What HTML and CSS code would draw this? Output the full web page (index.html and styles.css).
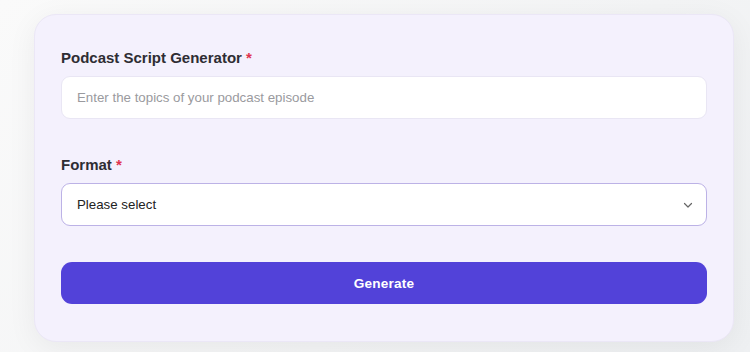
FILE: index.html
```html
<!DOCTYPE html>
<html>
<head>
<meta charset="utf-8">
<link rel="stylesheet" href="styles.css">
</head>
<body>
<div class="card">
  <div class="field">
    <label class="label">Podcast Script Generator <span class="req">*</span></label>
    <div class="input placeholder">Enter the topics of your podcast episode</div>
  </div>
  <div class="field">
    <label class="label">Format <span class="req">*</span></label>
    <div class="input select">
      <span>Please select</span>
      <svg width="12" height="12" viewBox="0 0 12 12"><path d="M2.5 4.5 L6 8 L9.5 4.5" fill="none" stroke="#666" stroke-width="1.2" stroke-linecap="round" stroke-linejoin="round"/></svg>
    </div>
  </div>
  <button class="btn">Generate</button>
</div>
</body>
</html>
```
FILE: styles.css
```css
html, body { margin: 0; padding: 0; }
body {
  width: 750px;
  height: 352px;
  overflow: hidden;
  background: linear-gradient(135deg, #fafafa 0%, #f3f4f5 60%, #eef0f2 100%);
  font-family: "Liberation Sans", Arial, sans-serif;
  padding-top: 14px;
  box-sizing: border-box;
}
.card {
  margin-left: 34px;
  width: 700px;
  height: 328px;
  box-sizing: border-box;
  padding: 34px 26px 0 26px;
  background: #f4f1fd;
  border: 1px solid #ebe7f6;
  border-radius: 22px;
  box-shadow: 0 6px 30px rgba(0,0,0,0.06);
  display: flex;
  flex-direction: column;
}
.field { display: flex; flex-direction: column; }
.field + .field { margin-top: 37px; }
.label {
  font-size: 15px;
  font-weight: bold;
  color: #2e2d33;
  line-height: 18px;
  margin-bottom: 9px;
}
.req { color: #e0344f; }
.input {
  height: 43px;
  box-sizing: border-box;
  background: #fff;
  border: 1px solid #e9e6f4;
  border-radius: 9px;
  padding: 0 15px;
  display: flex;
  align-items: center;
  font-size: 13.3px;
}
.placeholder { color: #9a9a9e; }
.select {
  justify-content: space-between;
  color: #222;
  border-color: #bcb2e6;
  padding-right: 12px;
}
.btn {
  margin-top: 36px;
  height: 42px;
  border: none;
  border-radius: 11px;
  background: #5242d9;
  color: #fff;
  font-family: "Liberation Sans", Arial, sans-serif;
  font-size: 13.6px;
  font-weight: bold;
  letter-spacing: 0.2px;
}
```
